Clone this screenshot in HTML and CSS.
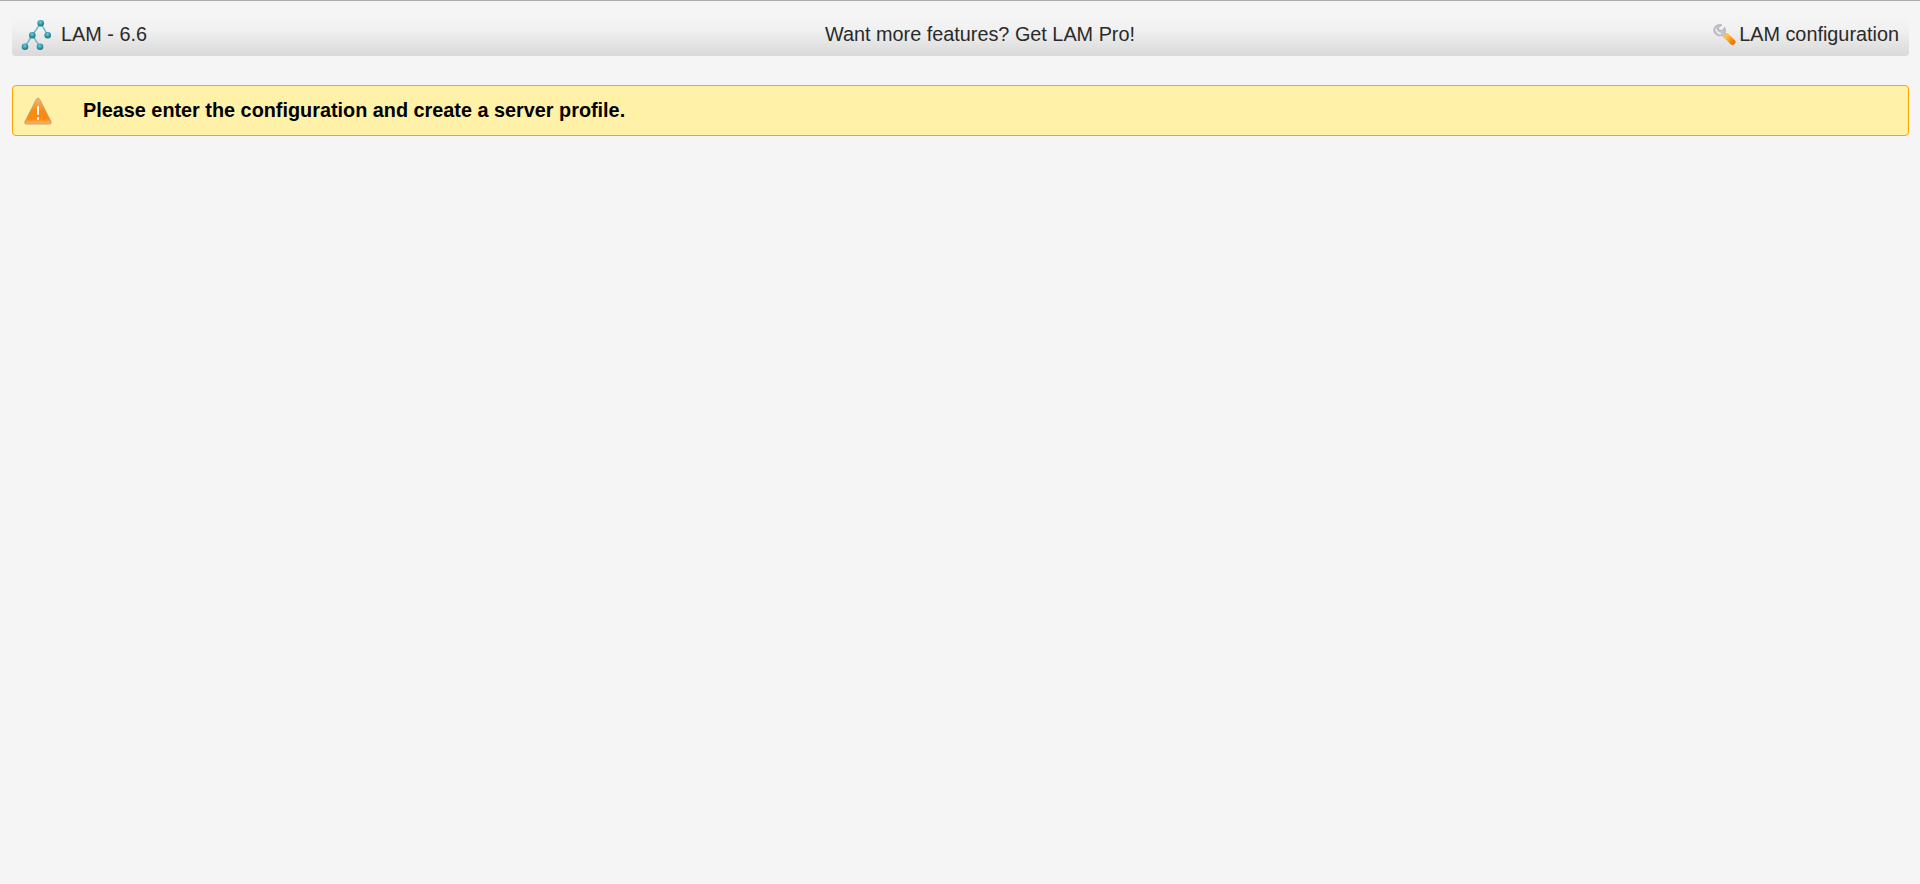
FILE: index.html
```html
<!DOCTYPE html>
<html lang="en">
<head>
<meta charset="utf-8">
<title>LAM</title>
<link rel="stylesheet" href="styles.css">
</head>
<body>
<header class="bar">
  <a class="brand" href="#">
    <svg class="icon-tree" viewBox="0 0 32 32" width="32" height="32" aria-hidden="true">
      <defs>
        <radialGradient id="node" cx="45%" cy="35%" r="65%">
          <stop offset="0" stop-color="#6fd0da"/>
          <stop offset="0.6" stop-color="#2b95a6"/>
          <stop offset="1" stop-color="#1d6f80"/>
        </radialGradient>
      </defs>
      <path class="tree-line" d="M19.700 4.200 L11.300 16.200 L4 27.800 M19.700 4.200 L26.700 16.200 M11.300 16.200 L19 27.800"/>
      <circle cx="19.700" cy="4.200" r="3.300" fill="url(#node)"/>
      <circle cx="11.300" cy="16.200" r="3.300" fill="url(#node)"/>
      <circle cx="26.700" cy="16.200" r="3.300" fill="url(#node)"/>
      <circle cx="4" cy="27.800" r="3.300" fill="url(#node)"/>
      <circle cx="19" cy="27.800" r="3.300" fill="url(#node)"/>
    </svg>
    <span>LAM - 6.6</span>
  </a>
  <a class="promo" href="#">Want more features? Get LAM Pro!</a>
  <a class="config" href="#">
    <svg class="icon-wrench" viewBox="0 0 24 22" width="24" height="22" aria-hidden="true">
      <defs>
        <linearGradient id="handle" x1="0" y1="0" x2="1" y2="1">
          <stop offset="0" stop-color="#ffc04a"/>
          <stop offset="1" stop-color="#ee7d06"/>
        </linearGradient>
      </defs>
      <path d="M9 1 C5.500 -.2 2 1.500 1 4.500 C.2 7.500 2 11 5.500 11.800 C7 12 8 11.800 9 11.300 L12 14.500 L15 11.500 L12 8.500 C12.800 6.500 12.400 4.500 11.500 3.200 L9.800 6.300 L6.200 6.200 L5.300 3.500 Z" fill="#c4c4cc" stroke="#9c9ca8" stroke-width=".6"/>
      <path d="M3 5 C3.500 7.500 5 9.500 8 9.800" fill="none" stroke="#efeff2" stroke-width="1.500"/>
      <path d="M14 12.500 L19.500 18" fill="none" stroke="url(#handle)" stroke-width="6" stroke-linecap="round"/>
    </svg>
    <span>LAM configuration</span>
  </a>
</header>
<main class="message">
  <svg class="icon-warning" viewBox="0 0 28 28" width="28" height="28" aria-hidden="true">
    <defs>
      <linearGradient id="warn" x1="0" y1="0" x2="0" y2="1">
        <stop offset="0" stop-color="#f3b878"/>
        <stop offset="0.5" stop-color="#fb8a10"/>
        <stop offset="0.8" stop-color="#fb8a10"/>
        <stop offset="1" stop-color="#fdba68"/>
      </linearGradient>
    </defs>
    <path d="M14 1 Q15 1 16 3 L27 24.500 Q28 27 25.500 27 L2.500 27 Q0 27 1 24.500 L12 3 Q13 1 14 1 Z" fill="url(#warn)" stroke="#c9a070" stroke-width="1"/>
    <rect x="13" y="9" width="2" height="9" rx="1" fill="#fff"/>
    <rect x="13" y="20" width="2" height="3" rx=".5" fill="#fff"/>
  </svg>
  <p class="message-text">Please enter the configuration and create a server profile.</p>
</main>
</body>
</html>
```

FILE: styles.css
```css
* {
  box-sizing: border-box;
}

html,
body {
  height: 100%;
}

body {
  margin: 0;
  padding: 14px 11px 0 12px;
  background: #f5f5f5;
  border-top: 1px solid #adadad;
  font-family: "Liberation Sans", Arial, sans-serif;
  font-size: 19.84px;
  color: #2a2a2a;
}

a {
  color: inherit;
  text-decoration: none;
}

.bar {
  display: grid;
  grid-template-columns: 240px 1fr 200px;
  align-items: center;
  height: 41px;
  padding: 0 10px 2px 9px;
  border-radius: 0 0 4px 4px;
  background: linear-gradient(to bottom, #f5f5f5 0%, #f1f1f1 35%, #d9d9d9 100%);
}

.brand {
  display: flex;
  align-items: center;
  gap: 8px;
}

.icon-tree {
  flex: none;
  overflow: visible;
  filter: blur(0.3px);
}

.tree-line {
  fill: none;
  stroke: #7dbcc7;
  stroke-width: 1.600;
}

.promo {
  text-align: center;
}

.config {
  display: flex;
  align-items: center;
  justify-content: flex-end;
  gap: 2px;
  white-space: nowrap;
}

.icon-wrench {
  flex: none;
  filter: blur(0.3px);
}

.message {
  display: flex;
  align-items: center;
  height: 51px;
  margin-top: 29px;
  padding-left: 11px;
  background: #fff1a8;
  border: 1px solid #ffa500;
  border-radius: 4px;
}

.icon-warning {
  flex: none;
  filter: blur(0.4px);
}

.message-text {
  margin: 0 0 0 31px;
  font-size: 19.84px;
  font-weight: 700;
  color: #000;
}
```
